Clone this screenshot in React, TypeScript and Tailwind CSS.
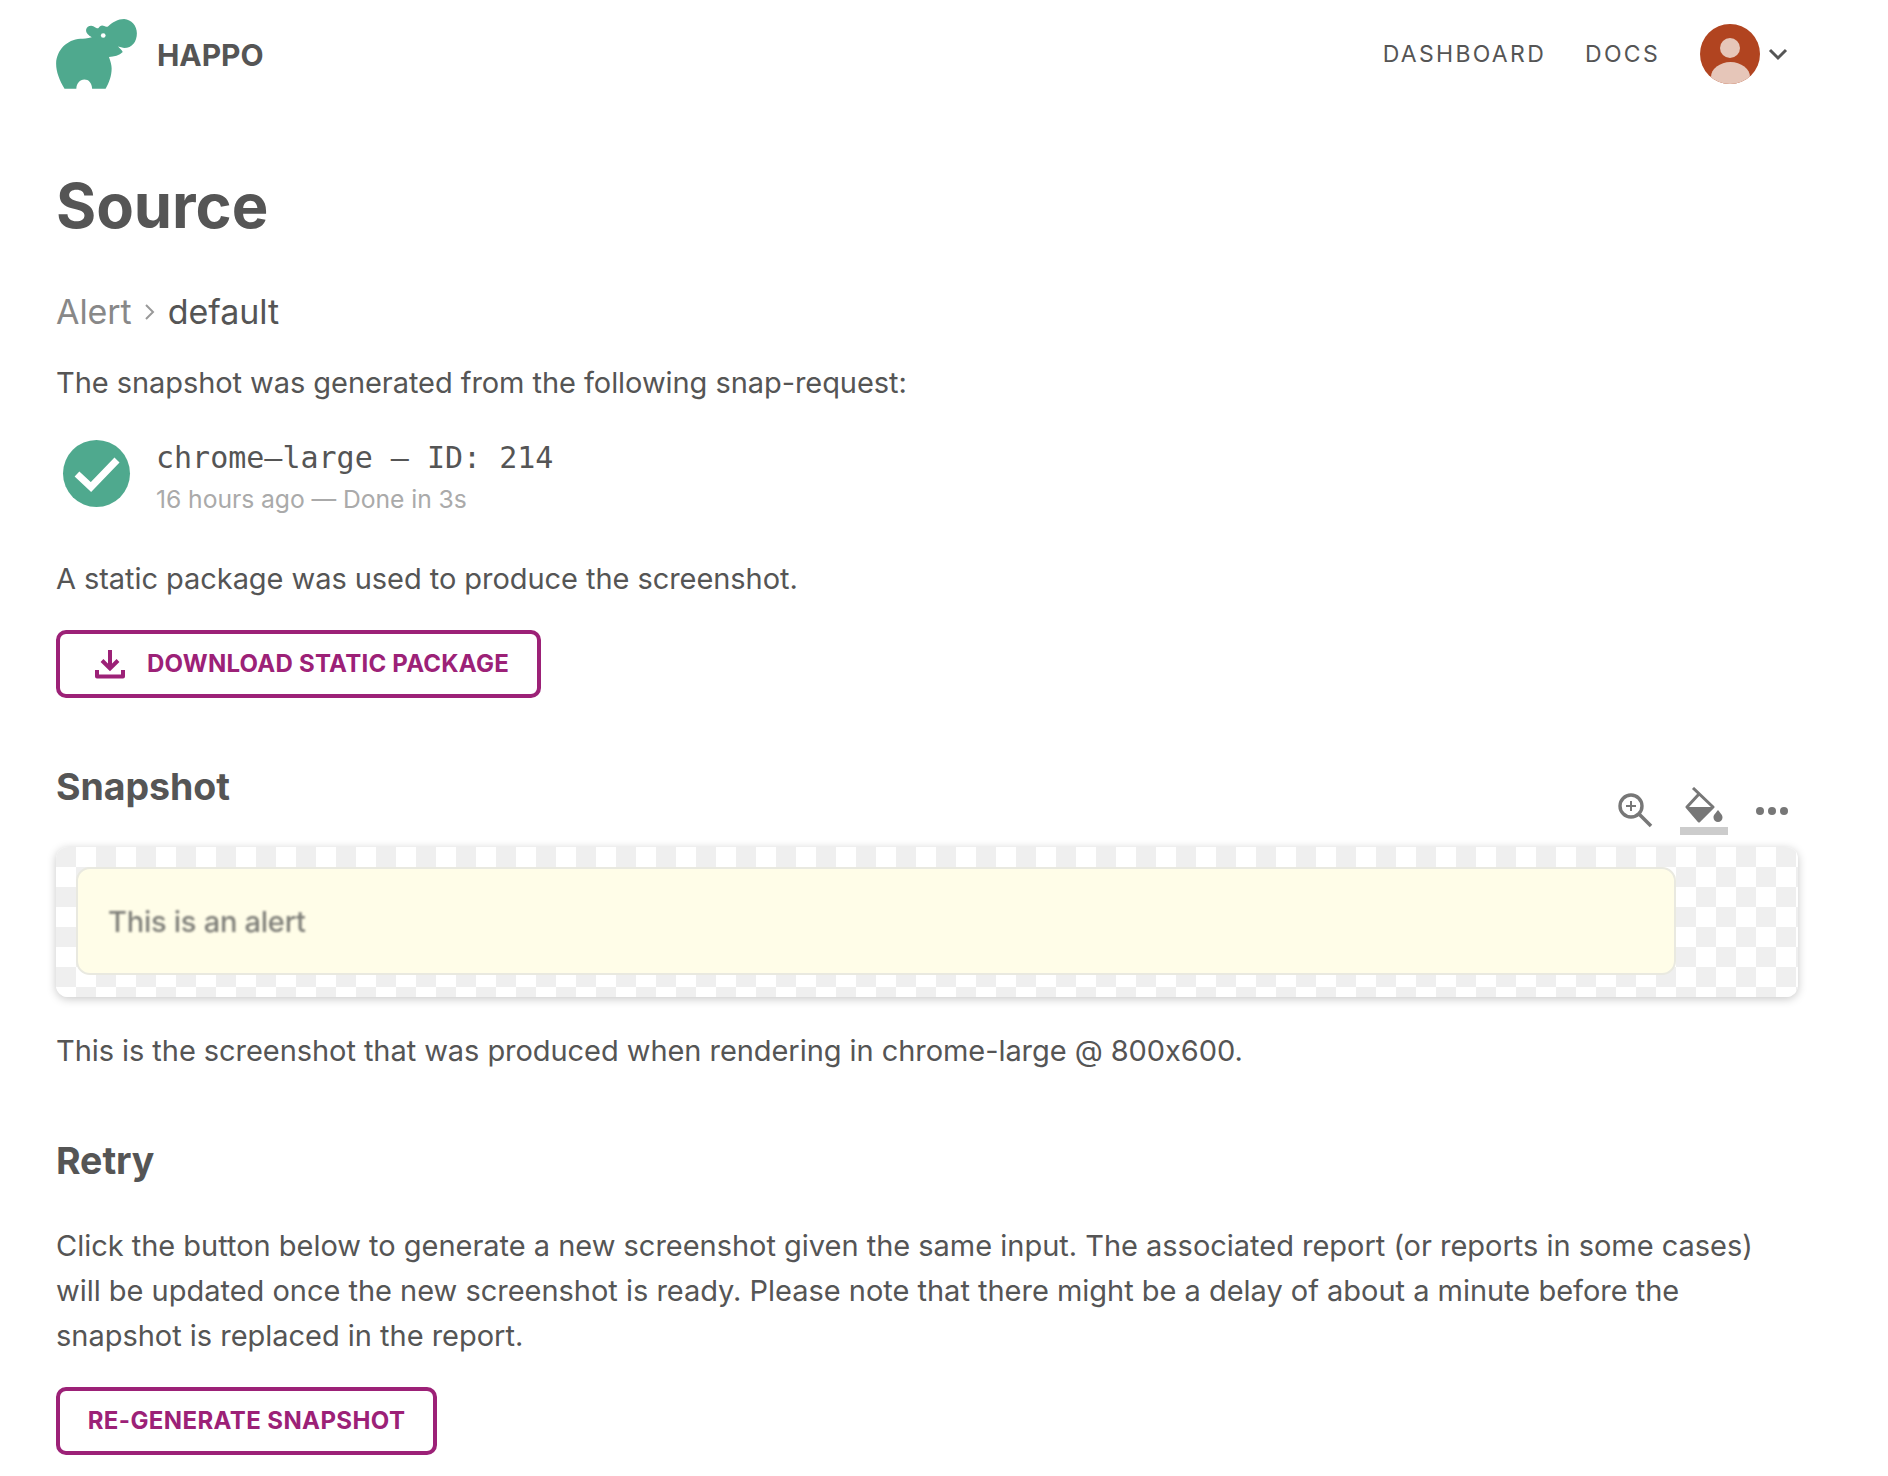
import React from "react";

const Hippo = () => (
  <svg width="81" height="70" viewBox="78 58 240 208" className="shrink-0">
    <path
      fill="#4fa98e"
      d="M103 265 C88 240 78 215 78 190 C80 150 110 120 150 117 C160 116 170 116 184 112 C176 108 166 100 167 90 C169 80 180 75 190 80 C196 83 200 87 204 85 C208 78 214 75 221 79 C225 81 228 82 232 80 C245 68 262 58 280 58 C302 60 318 78 318 100 C318 125 304 144 280 144 L262 140 C268 146 273 150 276 156 C266 166 250 170 235 171 C240 185 243 195 243 205 C243 228 235 248 225 265 L185 265 C184 248 175 238 162 238 C148 238 139 250 138 265 Z"
    />
    <circle cx="218" cy="107" r="7" fill="#fff" />
  </svg>
);

const Download = () => (
  <svg width="32" height="32" viewBox="0 0 32 32" fill="none" stroke="#9c2177" strokeWidth="4" className="shrink-0">
    <path d="M16 2v18M8 12.5l8 8 8-8" />
    <path d="M3 22v6.500h26V22" strokeLinejoin="round" />
  </svg>
);

const Zoom = () => (
  <svg width="36" height="36" viewBox="0 0 36 36" fill="none" stroke="#777" className="shrink-0 mt-[5px]">
    <circle cx="14" cy="14" r="11" strokeWidth="3.4" />
    <path d="M22 22l12 12" strokeWidth="3.6" />
    <path d="M14 9v10M9 14h10" strokeWidth="2" />
  </svg>
);

const Bucket = () => (
  <svg width="38" height="36" viewBox="0 0 38 36" className="shrink-0">
    <path d="M8 1L28 20 14 34 2 20 14 7" fill="none" stroke="#777" strokeWidth="3" strokeLinejoin="round" />
    <path d="M3 20H27L14 33Z" fill="#777" />
    <path d="M33 23c-3 4-4.500 5-4.500 7.500a4.500 4.500 0 0 0 9 0c0-2.500-1.500-3.500-4.500-7.500Z" fill="#777" />
  </svg>
);

export default function App() {
  return (
    <div className="min-h-[1476px] bg-white pl-[56px] pr-[90px] font-['Inter',sans-serif] [font-feature-settings:'calt'_0] tracking-[-0.06px] text-[#555] overflow-hidden">
      <header className="flex items-center h-[109px] pb-[1px]">
        <Hippo />
        <span className="ml-[20px] pt-[2px] text-[30px] font-bold text-[#555]">HAPPO</span>
        <nav className="ml-auto flex items-center text-[23px] tracking-[2.3px] text-[#555]">
          <span>DASHBOARD</span>
          <span className="ml-[39px]">DOCS</span>
          <div className="ml-[40px] relative w-[60px] h-[60px] rounded-full bg-[#b14420] overflow-hidden">
            <div className="absolute left-[20px] top-[14px] w-[20px] h-[20px] rounded-full bg-[#e6c6b9]" />
            <div className="absolute left-[11px] top-[38px] w-[39px] h-[30px] rounded-[50%] bg-[#e6c6b9]" />
          </div>
          <svg width="20" height="14" viewBox="0 0 20 14" fill="none" stroke="#555" strokeWidth="3" className="ml-[8px] mr-[10px]">
            <path d="M2 3l8 8 8-8" />
          </svg>
        </nav>
      </header>

      <h1 className="mt-[61px] text-[61.500px] leading-[72px] font-bold text-[#555]">Source</h1>

      <div className="mt-[45px] flex items-center text-[34px] leading-[50px]">
        <span className="text-[#888]">Alert</span>
        <svg width="12" height="20" viewBox="0 0 12 20" fill="none" stroke="#999" strokeWidth="2" className="mx-[12px]">
          <path d="M2 3l7 7-7 7" />
        </svg>
        <span className="text-[#555]">default</span>
      </div>

      <p className="mt-[23px] text-[29px] leading-[45px]">The snapshot was generated from the following snap-request:</p>

      <div className="mt-[33px] flex items-start">
        <div className="ml-[7px] mt-[2px] w-[67px] h-[67px] rounded-full bg-[#4fa98e] flex items-center justify-center shrink-0">
          <svg width="46" height="36" viewBox="0 0 46 36" fill="none" stroke="#fff" strokeWidth="7">
            <path d="M3 18l14 13L43 4" />
          </svg>
        </div>
        <div className="ml-[26px]">
          <div className="font-['DejaVu_Sans_Mono',monospace] tracking-normal text-[30px] leading-[40px] text-[#555]">chrome–large – ID: 214</div>
          <div className="mt-[3px] text-[24.700px] leading-[36px] text-[#aaa]">16 hours ago — Done in 3s</div>
        </div>
      </div>

      <p className="mt-[39px] text-[29px] leading-[45px]">A static package was used to produce the screenshot.</p>

      <button className="mt-[29px] flex items-center h-[68px] w-[485px] border-4 border-[#9c2177] rounded-[10px] pl-[34px] text-[24px] font-bold text-[#9c2177]">
        <Download />
        <span className="ml-[21px] tracking-[0.25px]">DOWNLOAD STATIC PACKAGE</span>
      </button>

      <div className="mt-[66px] flex items-start justify-between h-[83px]">
        <h2 className="text-[37.500px] leading-[46px] font-bold text-[#555]">Snapshot</h2>
        <div className="flex items-start gap-[27px] pt-[23px] pr-[9px]">
          <Zoom />
          <div className="flex flex-col items-center w-[48px]">
            <Bucket />
            <div className="mt-[4px] w-[48px] h-[8px] bg-[#ccc]" />
          </div>
          <svg width="34" height="10" viewBox="0 0 34 10" fill="#777" className="mt-[19px]">
            <circle cx="5" cy="5" r="4" />
            <circle cx="17" cy="5" r="4" />
            <circle cx="29" cy="5" r="4" />
          </svg>
        </div>
      </div>

      <div className="h-[150px] rounded-[12px] pt-[20px] shadow-[0_2px_10px_rgba(0,0,0,0.22)] bg-[conic-gradient(#fff_25%,#efefef_0_50%,#fff_0_75%,#efefef_0)] bg-[length:40px_40px]">
        <div className="ml-[20px] w-[1600px] h-[108px] rounded-[14px] border-2 border-[#e9e9e0] bg-[#fffde8] flex items-center pl-[30px] pt-[2px] text-[29px] font-medium tracking-[-0.25px] text-[#7e7e78]">
          <span className="blur-[0.8px]">This is an alert</span>
        </div>
      </div>

      <p className="mt-[31px] text-[29px] leading-[45px]">This is the screenshot that was produced when rendering in chrome-large @ 800x600.</p>

      <h2 className="mt-[65px] text-[37.500px] leading-[46px] font-bold text-[#555]">Retry</h2>

      <p className="mt-[39px] text-[29px] leading-[45px] tracking-[-0.02px]">
        Click the button below to generate a new screenshot given the same input. The associated report (or reports in some cases) will be updated once the new screenshot is ready. Please note that there might be a delay of about a minute before the snapshot is replaced in the report.
      </p>

      <button className="mt-[29px] flex items-center justify-center h-[68px] w-[381px] border-4 border-[#9c2177] rounded-[10px] text-[24px] font-bold text-[#9c2177]">
        <span className="tracking-[0.4px]">RE-GENERATE SNAPSHOT</span>
      </button>
    </div>
  );
}
